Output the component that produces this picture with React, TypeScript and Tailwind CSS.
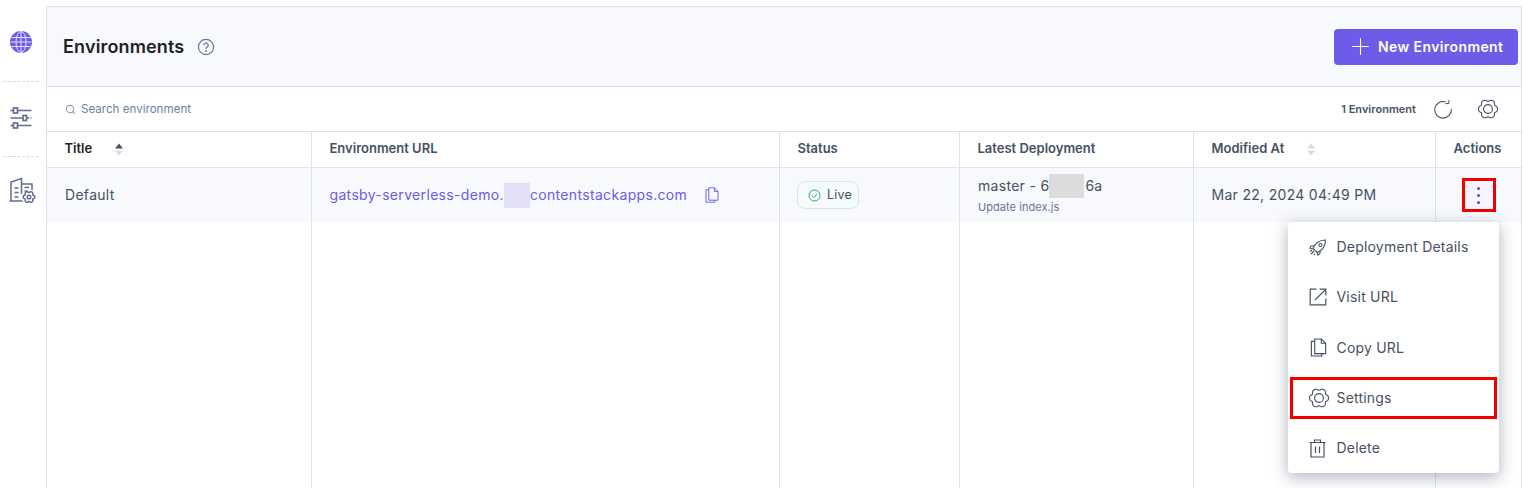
import { Plus, Search } from "lucide-react";

const border = "border-[#dde3ee]";

// six lobed outline shared by every gear in the page
function gearPath(cx: number, cy: number, r: number, lobe: number) {
  const pts: string[] = [];
  for (let i = 0; i < 120; i++) {
    const a = (i * 3 * Math.PI) / 180;
    const rr = r + lobe * (Math.cos(6 * a) - 0.25 * Math.cos(12 * a));
    pts.push(`${(cx + rr * Math.cos(a)).toFixed(2)} ${(cy + rr * Math.sin(a)).toFixed(2)}`);
  }
  return `M${pts.join("L")}Z`;
}

function GearIcon({ size = 20, color = "#475161" }: { size?: number; color?: string }) {
  return (
    <svg width={size} height={size} viewBox="0 0 20 20" fill="none" stroke={color} strokeWidth="1.1">
      <path d={gearPath(10, 10, 8.8, 0.9)} />
      <circle cx="10" cy="10" r="4.4" />
    </svg>
  );
}

function RailDivider() {
  return <div className="w-[36px] border-t border-dashed border-[#d5d8df]" />;
}

function GlobeIcon() {
  return (
    <svg width="22" height="22" viewBox="0 0 22 22" fill="none">
      <circle cx="11" cy="11" r="11" fill="#6c5ce7" />
      <g stroke="#e4e1fc" strokeWidth="1">
        <ellipse cx="11" cy="11" rx="5" ry="10.5" />
        <path d="M11 0.5v21M1.5 6.5h19M1.5 15.5h19M0.5 11h21" />
      </g>
    </svg>
  );
}

function SlidersIcon() {
  return (
    <svg width="22" height="22" viewBox="0 0 22 22" fill="none" stroke="#656d8e" strokeWidth="1.7">
      <path d="M0.5 3.5h3M8 3.5h13.5M0.5 11h12M17 11h2M20.5 11h1M0.5 18.5h3M8 18.5h13.5" />
      <rect x="3.5" y="1" width="4" height="5" />
      <rect x="13" y="8.5" width="3.5" height="5" />
      <rect x="3.5" y="16" width="4" height="5" />
    </svg>
  );
}

function BuildingGearIcon() {
  return (
    <svg width="27" height="27" viewBox="0 0 27 27" fill="none" stroke="#656d8e" strokeWidth="1.5">
      <path d="M0.5 24h13M2 24V5L12.5 1.5V7M12.5 7H23v6M12.5 7v10" />
      <path d="M5.5 11h4M5.5 15.5h4M5.5 20h4M15.5 10.5h4.5M15.5 14h3" />
      <path d={gearPath(20, 20, 5.2, 0.7)} />
      <circle cx="20" cy="20" r="1.8" />
    </svg>
  );
}

function RefreshIcon() {
  return (
    <svg width="20" height="20" viewBox="0 0 20 20" fill="none" stroke="#475161" strokeWidth="1.1">
      <path d="M12.5 2.9A8.3 8.3 0 1 0 18.3 10" />
      <path d="M15.8 1.2v3.4h-3.4" strokeWidth="1" />
    </svg>
  );
}

function CopyIcon({ size, color }: { size: number; color: string }) {
  return (
    <svg width={size} height={size} viewBox="0 0 18 20" fill="none" stroke={color} strokeWidth="1.2">
      <path d="M5 1h7l4.5 4.5V16.5H5Z" />
      <path d="M12 1v4.5h4.5" />
      <path d="M5 3.5H1.5V19h11v-2.5" />
    </svg>
  );
}

function VisitIcon() {
  return (
    <svg width="18" height="18" viewBox="0 0 18 18" fill="none" stroke="#475161" strokeWidth="1.2">
      <path d="M7.5 1.2H1.2v15.6h15.6V10.5" />
      <path d="M6 12L16.4 1.6M10.5 1.2h6.3v6.3" />
    </svg>
  );
}

function TrashIcon() {
  return (
    <svg width="17" height="19" viewBox="0 0 17 19" fill="none" stroke="#475161" strokeWidth="1.2">
      <path d="M0.5 3.5h16M5.5 3.5V1h6v2.5M2 3.5V18h13V3.5" />
      <path d="M6.5 7.5v6.5M10.5 7.5v6.5" />
    </svg>
  );
}

function RocketIcon() {
  return (
    <svg width="18" height="17" viewBox="0 0 18 17" fill="none" stroke="#475161" strokeWidth="1.1">
      <path d="M6 11.5l-2-2C5.5 5 10 1 16.5 1 16.7 7.5 12.5 12 8.2 13.5Z" />
      <path d="M5 7H2L0.8 9.2l3 .6M11 11.5v3L8.8 16l-.6-3" />
      <circle cx="11.5" cy="6" r="1.5" />
      <path d="M1 12.5l2-1.5M2 15l3-3M5 15.8l1-1.2" />
    </svg>
  );
}

function SortIcon({ active }: { active?: boolean }) {
  return (
    <svg width="10" height="13" viewBox="0 0 10 13">
      <path d="M5 0.5L9 5.5H1Z" fill={active ? "#475161" : "#d5dbe6"} />
      <path d="M5 12.5L1 7.5H9Z" fill="#d5dbe6" />
    </svg>
  );
}

function HeadCell({ label, sort, width }: { label: string; sort?: "active" | "idle"; width: string }) {
  return (
    <div className={`flex h-full items-center border-r ${border} ${width} pb-[1px] pl-[17.5px]`}>
      <span className={`text-[13px] font-semibold ${label === "Title" ? "text-[#222]" : "text-[#475161]"}`}>{label}</span>
      {sort && (
        <span className="ml-[22px]">
          <SortIcon active={sort === "active"} />
        </span>
      )}
    </div>
  );
}

function MenuItem({ icon, label }: { icon: React.ReactNode; label: string }) {
  return (
    <div className="flex h-[50.3px] items-center pl-[21px] text-sm tracking-[0.2px] text-[#475161]">
      <span className="flex w-[27.5px] items-center">{icon}</span>
      {label}
    </div>
  );
}

export default function App() {
  return (
    <div className="relative flex h-[488px] w-[1523px] overflow-hidden bg-white font-['Inter',sans-serif]">
      <aside className="flex w-[42px] shrink-0 flex-col items-center pt-[31px]">
        <GlobeIcon />
        <div className="mt-[28px]"><RailDivider /></div>
        <div className="mt-[25px]"><SlidersIcon /></div>
        <div className="mt-[27px]"><RailDivider /></div>
        <div className="mt-[20px] pl-[3px]"><BuildingGearIcon /></div>
      </aside>

      <main className={`ml-[4px] mt-[6px] flex w-[1476px] flex-col border-x border-t ${border}`}>
        <header className={`flex h-[80px] shrink-0 items-center justify-between border-b ${border} bg-[#f7f9fc] pl-4 pr-[3px]`}>
          <div className="flex items-center gap-[13px]">
            <h1 className="text-lg font-semibold tracking-[0.15px] text-[#222]">Environments</h1>
            <svg width="18" height="18" viewBox="0 0 18 18" fill="none" stroke="#6b7393" strokeWidth="1.2">
              <circle cx="9" cy="9" r="7.6" />
              <path d="M6.8 7.2a2.2 2.2 0 1 1 3.4 1.9c-.8.5-1.2.9-1.2 1.8" />
              <circle cx="9" cy="13" r="0.4" />
            </svg>
          </div>
          <button className="flex h-[36px] w-[184px] items-center rounded bg-[#6c5ce7] pl-[12.5px] text-sm font-semibold tracking-[0.4px] text-white">
            <Plus size={27} strokeWidth={0.9} className="mr-[4.5px]" />
            New Environment
          </button>
        </header>

        <div className={`flex h-[45px] shrink-0 items-center justify-between border-b ${border} pl-[18px] pr-[23px]`}>
          <div className="flex items-center gap-[5px] pt-[1px] text-[11.6px] text-[#6e7fa3]">
            <Search size={11} strokeWidth={2.2} className="text-[#8c9ab5]" />
            Search environment
          </div>
          <div className="flex items-center">
            <span className="text-[11px] font-semibold tracking-[0.02px] text-[#475161]">1 Environment</span>
            <span className="ml-[17px]"><RefreshIcon /></span>
            <span className="ml-[25px]"><GearIcon /></span>
          </div>
        </div>

        <div className={`flex h-[36px] shrink-0 items-center border-b ${border}`}>
          <HeadCell label="Title" sort="active" width="w-[265px]" />
          <HeadCell label="Environment URL" width="w-[468px]" />
          <HeadCell label="Status" width="w-[180px]" />
          <HeadCell label="Latest Deployment" width="w-[234px]" />
          <HeadCell label="Modified At" sort="idle" width="w-[242px]" />
          <div className="flex h-full flex-1 items-center justify-center pb-[1px] pr-[2px] text-[13px] font-semibold text-[#475161]">Actions</div>
        </div>

        <div className="flex h-[54px] shrink-0 items-center bg-[#f7f9fc] text-sm tracking-[0.3px] text-[#475161]">
          <div className={`flex h-full w-[265px] items-center border-r ${border} pl-[18px]`}>Default</div>
          <div className={`flex h-full w-[468px] items-center border-r ${border} pl-[17.5px] tracking-[0.33px] text-[#6c5ce7]`}>
            <span>gatsby-serverless-demo.</span>
            <span className="h-[25px] w-[26px] bg-[#e2e0f6]" />
            <span>contentstackapps.com</span>
            <span className="ml-[17px]"><CopyIcon size={16} color="#6c5ce7" /></span>
          </div>
          <div className={`flex h-full w-[180px] items-center border-r ${border} pl-[17px]`}>
            <span className="flex h-[28px] w-[62px] items-center gap-[6px] rounded-lg border border-[#d6e8e6] bg-[#f4fbfa] pl-[10px] text-[12.5px] tracking-[0.2px]">
              <svg width="13" height="13" viewBox="0 0 13 13" fill="none" stroke="#2f9e7a" strokeWidth="1">
                <circle cx="6.5" cy="6.5" r="5.5" />
                <path d="M4 6.7l1.8 1.8L9 5" />
              </svg>
              Live
            </span>
          </div>
          <div className={`flex h-full w-[234px] flex-col justify-center border-r ${border} pl-[18px] pt-[2px]`}>
            <div className="flex h-[18px] items-center">
              master - 6
              <span className="mr-[1px] h-[24px] w-[35px] bg-[#dcdcdc]" />
              6a
            </div>
            <div className="mt-[5px] text-[11px] tracking-[0.05px] text-[#6b7393]">Update index.js</div>
          </div>
          <div className={`flex h-full w-[242px] items-center border-r ${border} pl-[17.5px]`}>Mar 22, 2024 04:49 PM</div>
          <div className="flex h-full flex-1 items-center justify-center">
            <span className="flex h-[34px] w-[34px] flex-col items-center justify-center gap-[4px] border-[3px] border-[#f00000] bg-[#f6f4fe]">
              <i className="h-[3px] w-[3px] rounded-full bg-[#5a4bb5]" />
              <i className="h-[3px] w-[3px] rounded-full bg-[#5a4bb5]" />
              <i className="h-[3px] w-[3px] rounded-full bg-[#5a4bb5]" />
            </span>
          </div>
        </div>

        <div className="flex flex-1">
          <div className={`w-[265px] border-r ${border}`} />
          <div className={`w-[468px] border-r ${border}`} />
          <div className={`w-[180px] border-r ${border}`} />
          <div className={`w-[234px] border-r ${border}`} />
          <div className={`w-[242px] border-r ${border}`} />
        </div>
      </main>

      <div className="absolute left-[1288px] top-[222px] h-[251px] w-[211px] rounded bg-white shadow-[0_4px_16px_rgba(71,81,110,0.45)]">
        <MenuItem icon={<RocketIcon />} label="Deployment Details" />
        <MenuItem icon={<VisitIcon />} label="Visit URL" />
        <MenuItem icon={<CopyIcon size={19} color="#475161" />} label="Copy URL" />
        <MenuItem icon={<GearIcon color="#475161" />} label="Settings" />
        <MenuItem icon={<TrashIcon />} label="Delete" />
        <div className="absolute left-[2px] top-[155px] h-[42px] w-[207px] border-[3px] border-[#f00000]" />
      </div>
    </div>
  );
}
